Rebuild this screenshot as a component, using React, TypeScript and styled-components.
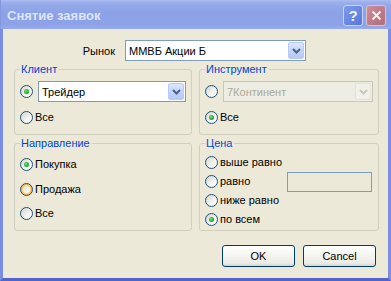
import React from 'react'
import styled, { createGlobalStyle } from 'styled-components'

const GlobalStyle = createGlobalStyle`
  html, body {
    margin: 0;
    padding: 0;
    background: #ECE9D8;
  }
  body {
    font-family: "Liberation Sans", Arial, sans-serif;
    font-size: 11px;
    color: #000;
  }
`

const Chevron = ({ color }: { color: string }) => (
  <svg width="9" height="6" viewBox="0 0 9 6">
    <polyline points="1,1 4.5,4.5 8,1" fill="none" stroke={color} strokeWidth="2" />
  </svg>
)

const Radio = ({ checked, hot, children }: { checked?: boolean; hot?: boolean; children?: React.ReactNode }) => (
  <OptionRow>
    <RadioCircle $checked={checked} $hot={hot} />
    {children && <OptionText>{children}</OptionText>}
  </OptionRow>
)

const Select = ({ value, disabled }: { value: string; disabled?: boolean }) => (
  <ComboBox $disabled={disabled}>
    <ComboText $disabled={disabled}>{value}</ComboText>
    <ComboButton $disabled={disabled}>
      <Chevron color={disabled ? '#C9C7BA' : '#4D6185'} />
    </ComboButton>
  </ComboBox>
)

export default function App() {
  return (
    <Window>
      <GlobalStyle />
      <TitleBar>
        <Title>Снятие заявок</Title>
        <CaptionButtons>
          <HelpButton>?</HelpButton>
          <CloseButton>
            <svg width="11" height="11" viewBox="0 0 11 11">
              <path d="M1.5 1.5 L9.5 9.5 M9.5 1.5 L1.5 9.5" stroke="#F4ECEE" strokeWidth="2" />
            </svg>
          </CloseButton>
        </CaptionButtons>
      </TitleBar>

      <Frame>
        <MarketRow>
          <MarketLabel>Рынок</MarketLabel>
          <MarketSelect>
            <Select value="ММВБ Акции Б" />
          </MarketSelect>
        </MarketRow>

        <Groups>
          <Group $top={5}>
            <Legend>Клиент</Legend>
            <Stack $gap={8}>
              <ComboRow>
                <RadioCircle $checked />
                <Select value="Трейдер" />
              </ComboRow>
              <Radio>Все</Radio>
            </Stack>
          </Group>

          <Group $top={5}>
            <Legend>Инструмент</Legend>
            <Stack $gap={8}>
              <ComboRow>
                <RadioCircle />
                <Select value="7Континент" disabled />
              </ComboRow>
              <Radio checked>Все</Radio>
            </Stack>
          </Group>

          <Group $top={7}>
            <Legend>Направление</Legend>
            <Stack $gap={9.5}>
              <Radio checked>Покупка</Radio>
              <Radio hot>Продажа</Radio>
              <Radio>Все</Radio>
            </Stack>
          </Group>

          <Group $top={3}>
            <Legend>Цена</Legend>
            <Stack $gap={0}>
              <PriceRow><Radio>выше равно</Radio></PriceRow>
              <PriceRow>
                <Radio>равно</Radio>
                <PriceInput />
              </PriceRow>
              <PriceRow><Radio>ниже равно</Radio></PriceRow>
              <PriceRow><Radio checked>по всем</Radio></PriceRow>
            </Stack>
          </Group>
        </Groups>

        <ButtonRow>
          <PushButton>OK</PushButton>
          <PushButton>Cancel</PushButton>
        </ButtonRow>
      </Frame>
    </Window>
  )
}

const Window = styled.div`
  width: 391px;
  height: 281px;
  display: flex;
  flex-direction: column;
  background: #ECE9D8;
  overflow: hidden;
`

const TitleBar = styled.div`
  height: 29px;
  flex: none;
  display: flex;
  align-items: center;
  padding: 0 5px 0 6px;
  background: linear-gradient(180deg, #AEBDF0 0, #9CB0EC 2px, #93A8EA 6px, #8CA1E6 50%, #8DA2E8 85%, #98ACEE 100%);
  border-left: 1px solid #8397E2;
`

const Title = styled.div`
  font-family: "Liberation Sans", Arial, sans-serif;
  font-weight: bold;
  font-size: 13px;
  color: #DCE5F9;
  padding-top: 1px;
`

const CaptionButtons = styled.div`
  margin-left: auto;
  display: flex;
  gap: 3px;
  margin-top: 1px;
`

const CaptionButton = styled.div`
  width: 20px;
  height: 21px;
  box-sizing: border-box;
  border: 1px solid #C9D4F6;
  border-radius: 3px;
  display: flex;
  align-items: center;
  justify-content: center;
`

const HelpButton = styled(CaptionButton)`
  background: linear-gradient(135deg, #7C9BEE, #5577DC);
  color: #F2F5FD;
  font-weight: bold;
  font-size: 15px;
  font-family: "Liberation Sans", Arial, sans-serif;
`

const CloseButton = styled(CaptionButton)`
  background: linear-gradient(135deg, #CC8D98, #B26A7A);
  border-color: #D8C4CC;
`

const Frame = styled.div`
  flex: 1;
  display: flex;
  flex-direction: column;
  padding: 11px 9px 0 11px;
  border-left: 3px solid #7A8DE2;
  border-right: 3px solid #7A8DE2;
  border-bottom: 3px solid #5264CC;
`

const MarketRow = styled.div`
  display: flex;
  align-items: center;
  gap: 10px;
`

const MarketLabel = styled.span`
  width: 101px;
  text-align: right;
`

const MarketSelect = styled.div`
  width: 181px;
  display: flex;
`

const Groups = styled.div`
  display: grid;
  grid-template-columns: 178px 180px;
  grid-template-rows: 72px 94px;
  column-gap: 7px;
  row-gap: 2px;
  margin-top: 2px;
`

const Group = styled.fieldset<{ $top: number }>`
  margin: 0;
  min-width: 0;
  box-sizing: border-box;
  border: 1px solid #D0D0BF;
  border-radius: 3px;
  padding: ${p => p.$top}px 5px 0 5px;
`

const Legend = styled.legend`
  color: #0046D5;
  line-height: 13px;
  padding: 0 2px 0 1px;
`

const Stack = styled.div<{ $gap: number }>`
  display: flex;
  flex-direction: column;
  gap: ${p => p.$gap}px;
`

const ComboRow = styled.div`
  display: flex;
  align-items: center;
  gap: 5px;
  height: 21px;
`

const OptionRow = styled.div`
  display: flex;
  align-items: center;
  gap: 2px;
  height: 15px;
`

const OptionText = styled.span`
  line-height: 15px;
  white-space: nowrap;
`

const PriceRow = styled.div`
  display: flex;
  align-items: center;
  height: 19px;
`

const PriceInput = styled.div`
  margin-left: auto;
  margin-right: 1px;
  width: 85px;
  height: 20px;
  box-sizing: border-box;
  border: 1px solid #7F9DB9;
  background: #ECE9D8;
`

const RadioCircle = styled.span<{ $checked?: boolean; $hot?: boolean }>`
  flex: none;
  width: 13px;
  height: 13px;
  box-sizing: border-box;
  border-radius: 50%;
  border: 1px solid #1C5180;
  background: linear-gradient(135deg, #D4D4CE 0%, #F2F2EE 55%, #FFFFFF 100%);
  box-shadow: ${p => (p.$hot ? 'inset 0 0 0 1px #F8B33A, inset 0 0 0 2px #FDD889' : 'none')};
  display: flex;
  align-items: center;
  justify-content: center;

  &::after {
    content: '';
    display: ${p => (p.$checked ? 'block' : 'none')};
    width: 5px;
    height: 5px;
    border-radius: 50%;
    background: radial-gradient(circle at 40% 40%, #8CE08C 0, #2FB42F 45%, #1C8E1C 100%);
  }
`

const ComboBox = styled.div<{ $disabled?: boolean }>`
  flex: 1;
  height: 21px;
  box-sizing: border-box;
  display: flex;
  padding: 1px;
  border: 1px solid ${p => (p.$disabled ? '#C9C7BA' : '#7F9DB9')};
  background: ${p => (p.$disabled ? '#EEEDE4' : '#FFFFFF')};
`

const ComboText = styled.span<{ $disabled?: boolean }>`
  flex: 1;
  display: flex;
  align-items: center;
  padding-left: 2px;
  color: ${p => (p.$disabled ? '#ACA899' : '#000')};
  white-space: nowrap;
  overflow: hidden;
`

const ComboButton = styled.span<{ $disabled?: boolean }>`
  width: 16px;
  box-sizing: border-box;
  display: flex;
  align-items: center;
  justify-content: center;
  border-radius: 2px;
  border: 1px solid ${p => (p.$disabled ? '#E3E2D9' : '#B9CBF5')};
  background: ${p =>
    p.$disabled
      ? '#F1F0EA'
      : 'linear-gradient(180deg, #DCE6FD 0%, #C4D5FA 50%, #B5C9F7 100%)'};
`

const ButtonRow = styled.div`
  display: flex;
  justify-content: flex-end;
  gap: 8px;
  margin-top: 14px;
  padding-right: 3px;
`

const PushButton = styled.div`
  width: 73px;
  height: 22px;
  box-sizing: border-box;
  border: 1px solid #003C74;
  border-radius: 3px;
  background: linear-gradient(180deg, #FFFFFF 0%, #F6F6F2 40%, #ECEBE5 85%, #D8D3C8 100%);
  display: flex;
  align-items: center;
  justify-content: center;
`
